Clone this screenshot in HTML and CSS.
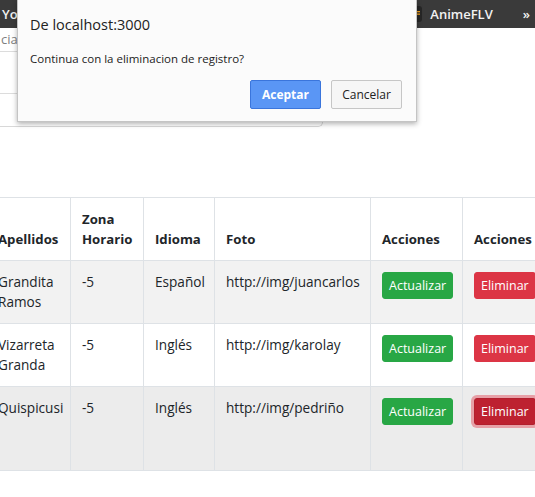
FILE: index.html
```html
<!DOCTYPE html>
<html lang="es">
<head>
<meta charset="utf-8">
<title>Registros</title>
<link rel="stylesheet" href="styles.css">
</head>
<body>
<div class="bookmarks">
  <span class="bm">YouTube</span>
  <span class="bm bm-anime">
    <svg class="bm-icon" width="16" height="16" viewBox="0 0 16 16">
      <rect x="0" y="0" width="16" height="16" rx="3" fill="#262626"/>
      <rect x="11" y="5" width="3" height="1.3" fill="#f0a020"/>
      <rect x="11" y="7.5" width="3" height="1.3" fill="#f0a020"/>
      <rect x="3" y="4" width="5" height="1.3" fill="#f0a020"/>
    </svg>
    AnimeFLV
  </span>
  <span class="bm bm-more">»</span>
</div>

<div class="page">
  <div class="form-card">
    <div class="form-row first"><span class="placeholder">cia</span></div>
    <div class="form-row second"></div>
    <div class="form-row third"></div>
  </div>

  <div class="table-wrap">
    <table class="grid">
      <colgroup>
        <col class="c1"><col class="c2"><col class="c3"><col class="c4"><col class="c5"><col class="c6">
      </colgroup>
      <thead>
        <tr>
          <th>Apellidos</th>
          <th>Zona Horario</th>
          <th>Idioma</th>
          <th>Foto</th>
          <th>Acciones</th>
          <th>Acciones</th>
        </tr>
      </thead>
      <tbody>
        <tr class="striped">
          <td>Grandita Ramos</td>
          <td>-5</td>
          <td>Español</td>
          <td>http://img/juancarlos</td>
          <td><button class="btn btn-green">Actualizar</button></td>
          <td><button class="btn btn-red">Eliminar</button></td>
        </tr>
        <tr>
          <td>Vizarreta Granda</td>
          <td>-5</td>
          <td>Inglés</td>
          <td>http://img/karolay</td>
          <td><button class="btn btn-green">Actualizar</button></td>
          <td><button class="btn btn-red">Eliminar</button></td>
        </tr>
        <tr class="hovered tall">
          <td>Quispicusi</td>
          <td>-5</td>
          <td>Inglés</td>
          <td>http://img/pedriño</td>
          <td><button class="btn btn-green">Actualizar</button></td>
          <td><button class="btn btn-red focused">Eliminar</button></td>
        </tr>
      </tbody>
    </table>
  </div>
</div>

<div class="dialog">
  <div class="dialog-title">De localhost:3000</div>
  <div class="dialog-msg">Continua con la eliminacion de registro?</div>
  <div class="dialog-actions">
    <button class="dbtn dbtn-primary">Aceptar</button>
    <button class="dbtn">Cancelar</button>
  </div>
</div>
</body>
</html>
```
FILE: styles.css
```css
html, body {
  margin: 0;
  padding: 0;
}
body {
  width: 535px;
  height: 497px;
  overflow: hidden;
  background: #fff;
  font-family: "Open Sans", "Noto Sans", sans-serif;
  color: #212529;
}

/* bookmarks bar */
.bookmarks {
  height: 28px;
  background: #3a3a3a;
  display: flex;
  align-items: center;
  padding: 0 5px 0 2px;
  color: #f2f2f2;
  font-size: 13px;
  font-weight: 600;
}
.bm-anime {
  margin-left: auto;
  display: flex;
  align-items: center;
  gap: 8px;
}
.bm-more {
  margin-left: 30px;
  font-size: 13px;
}

/* form card behind the dialog */
.form-card {
  margin-left: -20px;
  width: 341px;
  border: 1px solid #d8d8d8;
  border-top: 0;
  border-radius: 0 0 5px 5px;
}
.form-row {
  border-bottom: 1px solid #dcdcdc;
  padding-left: 20px;
  box-sizing: border-box;
}
.form-row.first {
  height: 24px;
  font-size: 13px;
  line-height: 20px;
  padding-top: 1px;
}
.form-row.second { height: 42px; }
.form-row.third { height: 32px; border-bottom: 0; }
.placeholder { color: #808080; }

/* table */
.table-wrap {
  margin-top: 70px;
}
.grid {
  margin-left: -14px;
  border-collapse: collapse;
  table-layout: fixed;
  width: 560px;
  font-size: 13.6px;
  line-height: 20.5px;
}
.c1 { width: 84px; }
.c2 { width: 73px; }
.c3 { width: 71px; }
.c4 { width: 156px; }
.c5 { width: 92px; }
.c6 { width: 84px; }
.grid th, .grid td {
  border: 1px solid #dee2e6;
  padding: 10.5px 11px;
  text-align: left;
  vertical-align: top;
}
.grid th {
  font-weight: 700;
  font-size: 13.2px;
  vertical-align: bottom;
}
.grid tr.striped td { background: #f2f2f2; }
.grid tr.hovered td { background: #ececec; }
.grid tr.tall td { height: 62px; }

.btn {
  font-family: inherit;
  font-size: 12.5px;
  line-height: 17px;
  padding: 4px 6px;
  border: 1px solid transparent;
  border-radius: 3px;
  color: #fff;
  display: inline-block;
}
.btn-green { background: #28a745; border-color: #28a745; }
.btn-red { background: #dc3545; border-color: #dc3545; }
.btn-red.focused {
  background: #bd2130;
  border-color: #b21f2d;
  box-shadow: 0 0 0 3px rgba(225, 83, 97, 0.5);
}

/* alert dialog */
.dialog {
  position: absolute;
  left: 17px;
  top: 0;
  width: 398px;
  height: 121px;
  background: #fbfbfb;
  border: 1px solid #c4c4c4;
  border-top: 0;
  box-shadow: 0 2px 5px rgba(0, 0, 0, 0.3);
  font-family: "Open Sans", "Noto Sans", sans-serif;
  color: #222;
}
.dialog-title {
  padding: 14px 0 0 12px;
  font-size: 14.5px;
  line-height: 22px;
}
.dialog-msg {
  padding: 15px 0 0 12px;
  font-size: 11.5px;
  line-height: 16px;
}
.dialog-actions {
  display: flex;
  justify-content: flex-end;
  gap: 10px;
  padding: 13px 14px 0 0;
}
.dbtn {
  font-family: inherit;
  width: 71px;
  height: 29px;
  font-size: 12px;
  background: #f6f6f6;
  border: 1px solid #c6c6c6;
  border-radius: 2px;
  color: #222;
  padding: 0;
}
.dbtn-primary {
  background: #5a96f5;
  border-color: #3a75dc;
  color: #fff;
  font-weight: 700;
}
```
